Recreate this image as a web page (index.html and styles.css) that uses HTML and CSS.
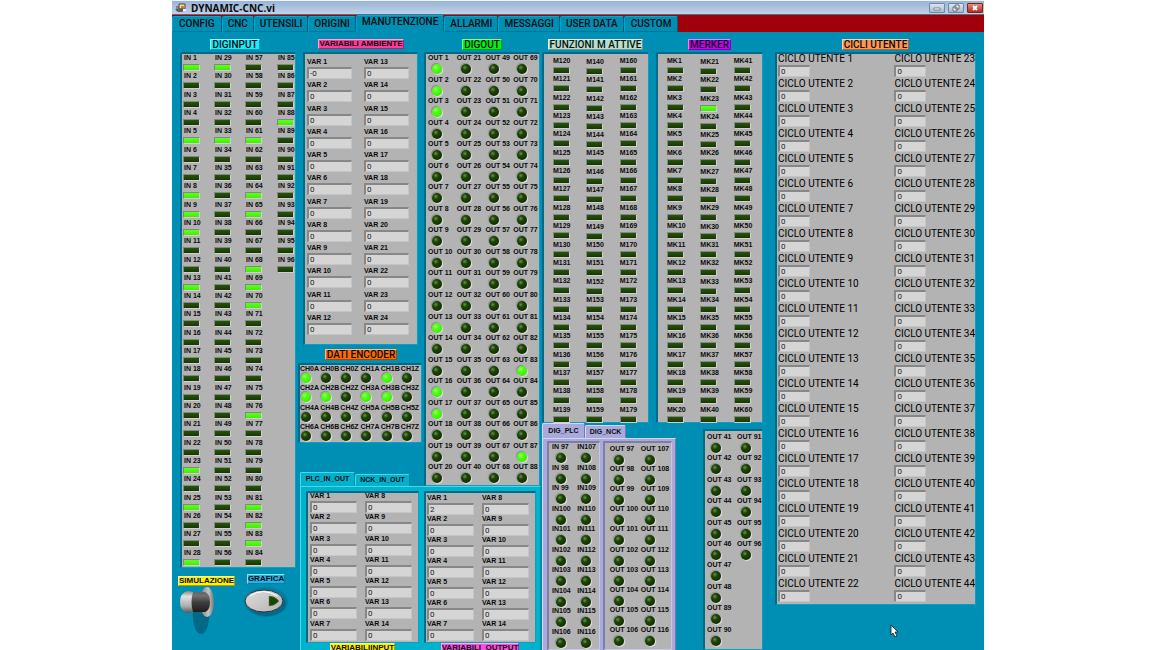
FILE: index.html
```html
<!DOCTYPE html>
<html lang="it">
<head>
<meta charset="utf-8">
<title>DYNAMIC-CNC.vi</title>
<link rel="stylesheet" href="styles.css">
</head>
<body>
<div class="app">
  <header class="titlebar">
    <svg class="app-icon" viewBox="0 0 12 10" aria-hidden="true"><path d="M1 3h5v5H1z" fill="#8a8377"/><path d="M4 1h6v5H4z" fill="#f0dfb0" stroke="#4b4740"/><path d="M0 6h5l2-2 3 3-3 2H3z" fill="#5a5f66"/><path d="M6 3h4v2H6z" fill="#d87a28"/><path d="M8 6h3v2H8z" fill="#f8f4e8"/></svg>
    <h1 class="title">DYNAMIC-CNC.vi</h1>
    <div class="window-buttons">
      <button class="win" aria-label="Riduci"><svg viewBox="0 0 14 8"><path d="M4 4h6v2H4z" fill="#fff" stroke="#5c6470" stroke-width=".7"/></svg></button>
      <button class="win" aria-label="Ripristina"><svg viewBox="0 0 14 8"><path d="M6 1h4v4H6zM4 3h4v4H4z" fill="#fff" stroke="#4c5460" stroke-width=".8"/></svg></button>
      <button class="win win-close" aria-label="Chiudi"><svg viewBox="0 0 14 8"><path d="M5 2l4 4M9 2l-4 4" stroke="#fff" stroke-width="1.800"/></svg></button>
    </div>
  </header>
  <nav class="tabs">
    <button class="tab">CONFIG</button><button class="tab">CNC</button><button class="tab">UTENSILI</button><button class="tab">ORIGINI</button><button class="tab tab-active">MANUTENZIONE</button><button class="tab">ALLARMI</button><button class="tab">MESSAGGI</button><button class="tab">USER DATA</button><button class="tab">CUSTOM</button>
  </nav>
  <main class="board">
    <section class="stack">
      <div class="heading"><h2 class="tag cyan">DIGINPUT</h2></div>
      <div class="panel inputs" data-bank="in"></div>
      <div class="controls">
        <div class="control">
          <label class="tag small yellow" for="simulazione">SIMULAZIONE</label>
          <button class="toggle" id="simulazione">
            <svg viewBox="0 0 40 50" aria-hidden="true">
              <defs>
                <linearGradient id="shaft" x1="0" y1="0" x2="0" y2="1"><stop offset="0" stop-color="#666"/><stop offset=".2" stop-color="#707070"/><stop offset=".5" stop-color="#404040"/><stop offset="1" stop-color="#1c1c1c"/></linearGradient>
                <linearGradient id="knob" x1="0" y1="0" x2="0" y2="1"><stop offset="0" stop-color="#888"/><stop offset=".25" stop-color="#e2e2e2"/><stop offset=".7" stop-color="#aaa"/><stop offset="1" stop-color="#555"/></linearGradient>
                <linearGradient id="washer"><stop offset="0" stop-color="#777"/><stop offset=".6" stop-color="#c4c4c4"/><stop offset="1" stop-color="#777"/></linearGradient>
              </defs>
              <path d="M14 22h16c1 14-2 26-8 26s-9-12-8-26z" fill="#006987"/>
              <ellipse cx="28" cy="16" rx="7" ry="15" fill="url(#washer)"/>
              <path d="M9 6h17q5 2 5 10t-5 10H9z" fill="url(#shaft)"/>
              <path d="M8 5q4 0 6 1-3 10 0 20-2 1-6 1-7-2-7-11T8 5z" fill="url(#knob)"/>
            </svg>
          </button>
        </div>
        <div class="control">
          <label class="tag small blue" for="grafica">GRAFICA</label>
          <button class="pill" id="grafica">
            <svg viewBox="0 0 44 32" aria-hidden="true">
              <defs><linearGradient id="face" x1="0" y1="0" x2="1" y2="1"><stop offset="0" stop-color="#ddd"/><stop offset="1" stop-color="#b4b4b4"/></linearGradient></defs>
              <ellipse cx="22" cy="16" rx="22" ry="15" fill="#007fa2"/>
              <ellipse cx="23" cy="18" rx="19" ry="12" fill="#006a88"/>
              <ellipse cx="20" cy="15" rx="19" ry="11" fill="url(#face)" stroke="#333"/>
              <path d="M6 10q13-9 27 0" fill="none" stroke="#fff"/>
              <path d="M25 10q6 0 10 5-4 5-10 5z" fill="#164800" stroke="#777" stroke-width=".5"/>
            </svg>
          </button>
        </div>
      </div>
    </section>

    <section class="stack">
      <div class="split split-top-left">
        <div class="stack">
          <div class="heading"><h2 class="tag small pink">VARIABILI AMBIENTE</h2></div>
          <div class="panel ambient" data-bank="ambient"></div>
          <div class="heading heading-short"><h2 class="tag orange">DATI ENCODER</h2></div>
          <div class="panel encoder" data-bank="encoder"></div>
          <div class="subtabs"><button class="subtab subtab-active">PLC_IN_OUT</button><button class="subtab">NCK_IN_OUT</button></div>
        </div>
        <div class="stack digout-stack">
          <div class="heading"><h2 class="tag green">DIGOUT</h2></div>
          <div class="panel digout" data-bank="out"></div>
        </div>
      </div>
      <div class="page page-cyan">
        <div class="stack"><div class="panel plc-vars" data-bank="plcIn"></div><div class="caption"><h3 class="tag small yellow">VARIABILIINPUT</h3></div></div>
        <div class="stack"><div class="panel plc-vars plc-out" data-bank="plcOut"></div><div class="caption"><h3 class="tag small magenta">VARIABILI_OUTPUT</h3></div></div>
      </div>
    </section>

    <section class="stack">
      <div class="split split-even">
        <div class="stack">
          <div class="heading"><h2 class="tag mint">FUNZIONI M ATTIVE</h2></div>
          <div class="panel merkers" data-bank="m"></div>
        </div>
        <div class="stack">
          <div class="heading"><h2 class="tag violet">MERKER</h2></div>
          <div class="panel merkers" data-bank="mk"></div>
        </div>
      </div>
      <div class="lower">
        <div class="stack lilac-group">
          <div class="subtabs subtabs-lilac"><button class="subtab lilac subtab-active">DIG_PLC</button><button class="subtab lilac">DIG_NCK</button></div>
          <div class="page page-lilac">
            <div class="panel plc-leds" data-bank="plcLedIn"></div>
            <div class="panel plc-leds plc-leds-out" data-bank="plcLedOut"></div>
          </div>
        </div>
        <div class="panel extra" data-bank="extra"></div>
      </div>
    </section>

    <section class="stack cycles-stack">
      <div class="heading"><h2 class="tag salmon">CICLI UTENTE</h2></div>
      <div class="panel cycles" data-bank="cycles"></div>
    </section>
  </main>
  <svg class="pointer" viewBox="0 0 9 13" aria-hidden="true"><path d="M1 1v10l2-2 2 4 2-1-2-4h3z" fill="#fff" stroke="#111" stroke-width=".8"/></svg>
</div>
<script src="app.js"></script>
</body>
</html>
```
FILE: styles.css
```css
* { box-sizing: border-box; }
body {
  margin: 0;
  padding: 0 172px;
  height: 100vh;
  overflow: hidden;
  background: #fff;
  color: #0c0c0c;
  font: bold 7px/8px "Liberation Sans", Arial, sans-serif;
}
h1, h2, h3 { margin: 0; font: inherit; }
button { margin: 0; padding: 0; border: 0; background: none; color: inherit; font: inherit; }
svg { display: block; }

.app {
  position: relative;
  display: flex;
  flex-direction: column;
  height: 100%;
  background: #008fb4;
}

.titlebar {
  display: flex;
  align-items: center;
  flex: none;
  height: 15px;
  padding: 0 1px 0 3px;
  border-top: 1px solid #eef3f9;
  border-bottom: 1px solid #5c6c80;
  background: linear-gradient(#9ab4d4, #bdd2ea);
}
.app-icon { width: 12px; height: 10px; }
.title { margin-left: 4px; font: bold 10px/12px "Noto Sans", sans-serif; }
.window-buttons { display: flex; gap: 3px; margin-left: auto; }
.win {
  width: 16px;
  height: 10px;
  border: 1px solid #7187a3;
  border-radius: 1px;
  background: linear-gradient(#dbe5f0, #a5bad4);
}
.win svg { width: 14px; height: 8px; }
.win-close { border-color: #7c241c; background: linear-gradient(#dd9082, #b52c18); }

.tabs {
  display: flex;
  align-items: flex-end;
  flex: none;
  height: 17px;
  background: #a0000c;
}
.tab {
  height: 16px;
  padding: 0 5px 1px;
  border-top: 1px solid #00a9ce;
  border-right: 1px solid #005f7b;
  border-left: 1px solid #00a5ca;
  border-bottom: 1px solid #007596;
  border-radius: 2px 2px 0 0;
  background: #008fb4;
  font: 500 10px/12px Roboto, Arial, sans-serif;
}
.tab:first-child, .tab:last-child { padding-right: 6px; padding-left: 6px; }
.tab-active { height: 17px; padding-bottom: 3px; border-bottom-color: #008fb4; }

.board {
  display: grid;
  grid-template-columns: 126fr 244fr 222fr 220fr;
  flex: 1;
  min-height: 0;
}
.stack { display: flex; flex-direction: column; min-width: 0; min-height: 0; }
.split { display: grid; flex: 1; min-height: 0; }
.split-top-left { grid-template-columns: 126fr 118fr; }
.split-even { grid-template-columns: 107fr 107fr; gap: 7px; padding-right: 1px; }

.heading {
  display: flex;
  align-items: center;
  justify-content: center;
  flex: none;
  height: 20px;
  padding-top: 4px;
}
.heading-short { height: 18px; padding-top: 1px; }
.tag {
  padding: 0 1px;
  border: 1px solid;
  border-color: #ffffff88 #00000055 #00000055 #ffffff88;
  font: 500 10px/9px Roboto, Arial, sans-serif;
  white-space: nowrap;
}
.small { padding: 0; font: bold 8px/8px "Liberation Sans", Arial, sans-serif; }
.cyan { background: #16edff; }
.pink { background: #ff3c9b; }
.green { background: #00f315; }
.mint { background: #b4dfca; }
.violet { background: #c800ff; }
.salmon { background: #ff9752; }
.orange { background: #ff6a00; }
.yellow { background: #fff200; }
.blue { background: #20b4ec; }
.magenta { background: #ff4ee0; }

.panel {
  display: grid;
  flex: 1;
  min-height: 0;
  border: solid;
  border-width: 2px 1px 1px 2px;
  border-color: #006b89 #0aa0c4 #0aa0c4 #006b89;
  background: #b3b3b3;
}
.column {
  display: grid;
  grid-template-rows: repeat(var(--rows), minmax(0, 1fr));
  min-width: 0;
  min-height: 0;
}
.cell { display: flex; flex-direction: column; align-items: flex-start; white-space: nowrap; }
.name { flex: none; height: 8px; }
.led { flex: none; }
.led-bar {
  width: 17px;
  height: 7px;
  margin-top: 2px;
  border: 1px solid;
  border-color: #858585 #cfcfcf #cfcfcf #858585;
  background: linear-gradient(#27540e, #173700);
}
.led-bar.on { background: linear-gradient(#5dff22, #40ee00); }
.led-dot {
  width: 10px;
  height: 10px;
  margin: 2px 0 0 4px;
  border-radius: 50%;
  background: radial-gradient(circle at 38% 35%, #6f8f58 0, #1d4705 28%, #123000 70%);
  box-shadow: 1px 1px 1px #e2e2e2, -1px -1px 1px #8d8d8d;
}
.led-dot.on { background: radial-gradient(circle at 38% 35%, #a0ff70 0, #4dff14 30%, #3deb00 75%); }
.value {
  flex: none;
  width: 45px;
  height: 12px;
  margin: 0;
  padding: 0 0 0 1px;
  border: solid;
  border-width: 2px 1px 1px 2px;
  border-color: #878787 #c5c5c5 #c5c5c5 #878787;
  border-radius: 0;
  background: #d5d5d5;
  color: #222;
  font: 8px/9px Roboto, Arial, sans-serif;
}

.inputs { grid-template-columns: 31fr 31fr 32fr 18fr; margin: 0 2px 0 8px; padding-left: 1px; }
.inputs .name { padding-left: 1px; line-height: 7px; }
.ambient { grid-template-columns: 58fr 54fr; margin: 0 6px 0 5px; padding: 4px 0 7px 2px; }
.ambient .value { margin-top: 1px; }
.encoder { grid-template-columns: repeat(6, 1fr); flex: none; height: 80px; margin-right: 2px; }
.encoder .led-dot { margin-top: 0; margin-left: 1px; }
.digout-stack { padding-right: 2px; }
.digout { grid-template-columns: 29fr 29fr 28fr 26fr; padding: 0 0 0 2px; }
.digout .name { line-height: 7px; }
.merkers { grid-template-columns: 33fr 33fr 28fr; padding: 3px 0 0 9px; }
.merkers .column { margin-bottom: -2px; }
.merkers .column:nth-child(2) { padding-top: 1px; }
.cycles-stack { padding: 0 8px 45px 11px; }
.cycles { grid-template-columns: 117fr 81fr; padding-left: 1px; }
.cycles .name { height: 10px; font: 10px/9px Roboto, Arial, sans-serif; color: #000; }
.cycles .value { width: 32px; margin-top: 1px; }

.controls { display: flex; flex: none; gap: 9px; height: 82px; padding: 6px 0 0 6px; }
.control { display: flex; flex-direction: column; align-items: center; }
.control:first-child { padding-top: 2px; }
.toggle { align-self: flex-start; margin-left: 1px; }
.toggle svg { width: 40px; height: 50px; }
.pill { margin-top: 2px; }
.pill svg { width: 44px; height: 32px; }

.subtabs { display: flex; align-items: flex-end; flex: none; height: 43px; padding-left: 2px; }
.subtab {
  width: 55px;
  height: 12px;
  border: 1px solid;
  border-color: #48d7e8 #0087a1 #00b2cc #48d7e8;
  border-radius: 2px 2px 0 0;
  background: #00b2cc;
}
.subtab-active { height: 14px; }
.page { display: grid; flex: none; border: 1px solid; border-bottom: 0; }
.page-cyan {
  grid-template-columns: 113fr 112fr;
  gap: 5px;
  height: 164px;
  margin: 0 1px 0 2px;
  padding: 4px 4px 0 5px;
  border-color: #48d7e8 #0087a1 #0087a1 #48d7e8;
  background: #00b2cc;
}
.plc-vars { grid-template-columns: 56fr 54fr; padding-left: 2px; }
.plc-out { padding-top: 2px; padding-left: 1px; }
.plc-vars .name { line-height: 6px; }
.plc-vars .value { width: 47px; height: 12px; }
.caption { display: flex; justify-content: center; flex: none; height: 7px; }
.caption .tag { height: 10px; }

.lower { display: flex; justify-content: space-between; flex: none; height: 227px; padding-right: 1px; }
.lilac-group { flex: 0 1 134px; }
.subtabs-lilac { height: 15px; padding: 0; }
.lilac {
  width: 41px;
  height: 13px;
  border-color: #d5d5f5 #7878ab #a9a9db #d5d5f5;
  background: #a9a9db;
}
.lilac.subtab-active { width: 43px; height: 15px; }
.page-lilac {
  grid-template-columns: 54fr 71fr;
  gap: 3px;
  flex: 1;
  padding: 2px 3px 0 4px;
  border-color: #d5d5f5 #7878ab #7878ab #d5d5f5;
  background: #a9a9db;
}
.plc-leds { grid-template-columns: 26fr 22fr; padding: 0 0 1px 3px; border-color: #7c7cad #c5c5ea #c5c5ea #7c7cad; }
.plc-leds-out { grid-template-columns: 32fr 31fr; padding: 2px 0 3px 5px; }
.extra { grid-template-columns: 30fr 25fr; flex: 0 1 60px; margin-top: 6px; padding: 2px 0 2px 2px; }

.pointer { position: absolute; left: 718px; top: 624px; width: 9px; height: 13px; }
```
FILE: app.js
```javascript
const range = (prefix, from, to) =>
  Array.from({ length: to - from + 1 }, (_, i) => prefix + (from + i));

const banks = {
  in: {
    kind: "bar", rows: 28,
    columns: [range("IN ", 1, 28), range("IN ", 29, 56), range("IN ", 57, 84), range("IN ", 85, 96)],
    on: [1, 5, 8, 9, 10, 13, 23, 25, 28, 29, 33, 61, 64, 65, 68, 69, 70, 76, 81, 82, 83, 88].map(n => "IN " + n)
  },
  out: {
    kind: "dot", rows: 20,
    columns: [range("OUT ", 1, 20), range("OUT ", 21, 40), range("OUT ", 49, 68), range("OUT ", 69, 88)],
    on: [1, 2, 3, 13, 16, 17, 83, 87].map(n => "OUT " + n)
  },
  m: { kind: "bar", rows: 20, columns: [range("M", 120, 139), range("M", 140, 159), range("M", 160, 179)] },
  mk: { kind: "bar", rows: 20, columns: [range("MK", 1, 20), range("MK", 21, 40), range("MK", 41, 60)], on: ["MK23"] },
  encoder: {
    kind: "dot", rows: 4,
    columns: [[0, "A"], [0, "B"], [0, "Z"], [1, "A"], [1, "B"], [1, "Z"]]
      .map(([odd, phase]) => [0, 2, 4, 6].map(n => "CH" + (n + odd) + phase)),
    on: ["CH0A", "CH1B", "CH2A", "CH2B", "CH3A", "CH3B"]
  },
  ambient: { kind: "value", rows: 12, columns: [range("VAR ", 1, 12), range("VAR ", 13, 24)], values: { "VAR 1": "-0" } },
  plcIn: { kind: "value", rows: 7, columns: [range("VAR ", 1, 7), range("VAR ", 8, 14)] },
  plcOut: { kind: "value", rows: 7, columns: [range("VAR ", 1, 7), range("VAR ", 8, 14)], values: { "VAR 1": "2" } },
  cycles: { kind: "value", rows: 22, columns: [range("CICLO UTENTE ", 1, 22), range("CICLO UTENTE ", 23, 44)] },
  plcLedIn: { kind: "dot", rows: 10, columns: [[...range("IN ", 97, 99), ...range("IN", 100, 106)], range("IN", 107, 116)] },
  plcLedOut: { kind: "dot", rows: 10, columns: [range("OUT ", 97, 106), range("OUT ", 107, 116)] },
  extra: { kind: "dot", rows: 10, columns: [[...range("OUT ", 41, 48), "OUT 89", "OUT 90"], range("OUT ", 91, 96)] }
};

function makeCell(bankName, bank, text) {
  const cell = document.createElement("div");
  cell.className = "cell";
  const isValue = bank.kind === "value";
  const name = document.createElement(isValue ? "label" : "span");
  name.className = "name";
  name.textContent = text;
  const item = document.createElement(isValue ? "input" : "span");
  if (isValue) {
    item.className = "value";
    item.id = bankName + "-" + text.replace(/ /g, "-");
    item.value = (bank.values && bank.values[text]) || "0";
    item.readOnly = true;
    name.htmlFor = item.id;
  } else {
    item.className = "led led-" + bank.kind + (bank.on && bank.on.includes(text) ? " on" : "");
  }
  cell.append(name, item);
  return cell;
}

document.querySelectorAll("[data-bank]").forEach(panel => {
  const bankName = panel.dataset.bank;
  const bank = banks[bankName];
  bank.columns.forEach(names => {
    const column = document.createElement("div");
    column.className = "column";
    column.style.setProperty("--rows", bank.rows);
    names.forEach(text => column.append(makeCell(bankName, bank, text)));
    panel.append(column);
  });
});
```
